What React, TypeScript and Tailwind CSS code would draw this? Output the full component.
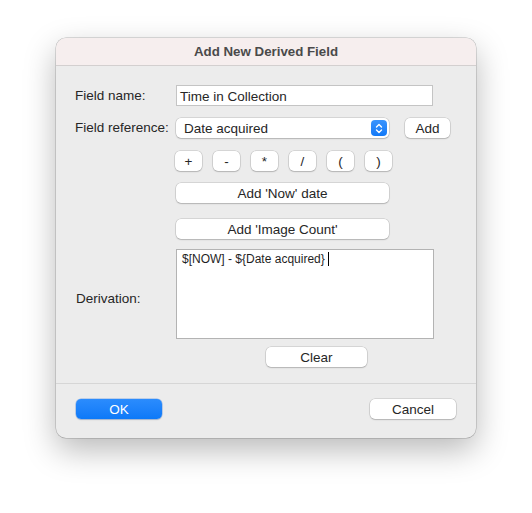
import React from "react";

const btn =
  "flex items-center justify-center pt-[1px] bg-white rounded-[5px] shadow-[0_0_0_0.5px_rgba(0,0,0,0.18),0_1px_1.5px_rgba(0,0,0,0.16)] text-[13.5px] text-[#262626] leading-none";

export default function App() {
  const ops = ["+", "-", "*", "/", "(", ")"];
  return (
    <div
      className="w-[532px] h-[513px] bg-white pl-[56px] pt-[38px]"
      style={{ fontFamily: '"Liberation Sans", Arial, sans-serif' }}
    >
      <div className="w-[420px] h-[400px] rounded-[10px] bg-[#ececec] overflow-hidden shadow-[0_0_0_0.5px_rgba(0,0,0,0.25),0_12px_32px_rgba(0,0,0,0.28)] flex flex-col">
        <div className="h-[28px] bg-[#f6eeee] border-b border-[#d3cfcf] flex items-center justify-center">
          <span className="text-[13.3px] font-bold text-[#4a4a4a]">Add New Derived Field</span>
        </div>

        <div className="flex flex-col pt-[19px]">
          {/* Field name */}
          <div className="flex items-center h-[21px]">
            <div className="w-[120px] pl-[19px] pt-[1px] text-[13.5px] text-[#262626]">Field name:</div>
            <div className="w-[257px] h-[21px] bg-white border border-[#c4c4c4] flex items-center pl-[3px] pt-[2px] text-[13.5px] leading-none text-[#262626]">
              Time in Collection
            </div>
          </div>

          {/* Field reference */}
          <div className="flex items-center h-[20px] mt-[12px]">
            <div className="w-[120px] pl-[19px] pt-[1px] text-[13.5px] text-[#262626]">Field reference:</div>
            <div className="w-[213px] h-[20px] bg-white rounded-[5px] shadow-[0_0_0_0.5px_rgba(0,0,0,0.18),0_1px_1.5px_rgba(0,0,0,0.16)] flex items-center justify-between pl-[8px] pr-[2px]">
              <span className="text-[13.5px] text-[#262626] pt-[1px] leading-none">Date acquired</span>
              <div className="w-[16px] h-[16px] rounded-[4px] bg-gradient-to-b from-[#3a94fd] to-[#1079f7] flex items-center justify-center">
                <svg width="8" height="11" viewBox="0 0 8 11" fill="none" stroke="white" strokeWidth="1.4" strokeLinecap="round" strokeLinejoin="round">
                  <path d="M1.5 4 L4 1.5 L6.5 4" />
                  <path d="M1.5 7 L4 9.5 L6.5 7" />
                </svg>
              </div>
            </div>
            <div className={`${btn} w-[45px] h-[20px] ml-[16px]`}>Add</div>
          </div>

          {/* Operators */}
          <div className="flex h-[20px] mt-[13px] pl-[119px] gap-[11px]">
            {ops.map((o) => (
              <div key={o} className={`${btn} w-[27px] h-[20px]`}>
                {o}
              </div>
            ))}
          </div>

          <div className="pl-[120px] mt-[12px]">
            <div className={`${btn} w-[213px] h-[20px]`}>Add 'Now' date</div>
          </div>
          <div className="pl-[120px] mt-[16px]">
            <div className={`${btn} w-[213px] h-[20px]`}>Add 'Image Count'</div>
          </div>

          {/* Derivation */}
          <div className="flex items-center mt-[10px] h-[90px]">
            <div className="w-[120px] pl-[20px] pt-[10px] text-[13.5px] text-[#262626]">Derivation:</div>
            <div className="w-[258px] h-[90px] bg-white border border-[#b3b3b3] pl-[5px] pt-[2px] self-start">
              <div className="flex items-center text-[12px] text-[#1f1f1f] leading-[14px]">
                <span>$[NOW] - ${"{"}Date acquired{"}"}</span>
                <span className="ml-[3px] w-[1px] h-[14px] bg-black inline-block" />
              </div>
            </div>
          </div>

          <div className="pl-[210px] mt-[8px]">
            <div className={`${btn} w-[101px] h-[20px]`}>Clear</div>
          </div>

          <div className="mt-[16px] border-t border-[#d6d6d6]" />

          <div className="flex justify-between items-center px-[20px] mt-[15px]">
            <div className="w-[86px] h-[20px] pt-[1px] leading-none rounded-[5px] bg-gradient-to-b from-[#2b8cfd] to-[#0c79f8] shadow-[0_0_0_0.5px_rgba(0,90,220,0.4),0_1px_1.5px_rgba(0,0,0,0.15)] flex items-center justify-center text-[13.5px] text-white font-medium">
              OK
            </div>
            <div className={`${btn} w-[86px] h-[20px]`}>Cancel</div>
          </div>
        </div>
      </div>
    </div>
  );
}
